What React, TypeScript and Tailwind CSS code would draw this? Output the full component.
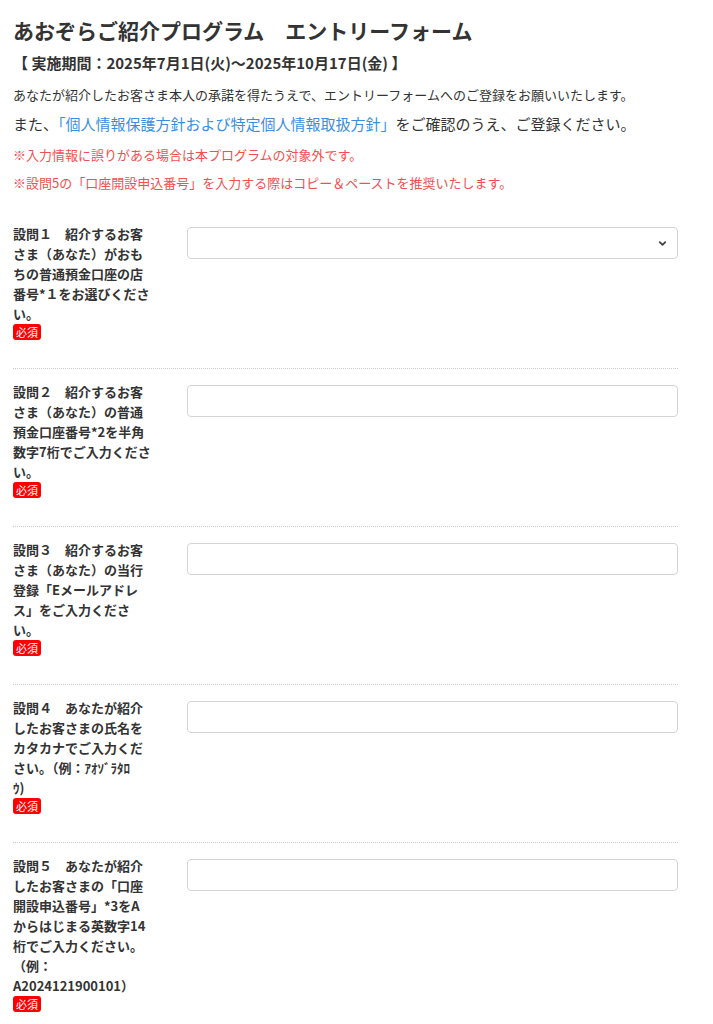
import { ChevronDown } from "lucide-react";

const questions = [
  {
    lines: ["設問１　紹介するお客", "さま（あなた）がおも", "ちの普通預金口座の店", "番号*１をお選びくださ", "い。"],
    kind: "select",
  },
  {
    lines: ["設問２　紹介するお客", "さま（あなた）の普通", "預金口座番号*2を半角", "数字7桁でご入力くださ", "い。"],
    kind: "text",
  },
  {
    lines: ["設問３　紹介するお客", "さま（あなた）の当行", "登録「Eメールアドレ", "ス」をご入力くださ", "い。"],
    kind: "text",
  },
  {
    lines: ["設問４　あなたが紹介", "したお客さまの氏名を", "カタカナでご入力くだ", "さい。（例：ｱｵｿﾞﾗﾀﾛ", "ｳ)"],
    kind: "text",
  },
  {
    lines: [
      "設問５　あなたが紹介",
      "したお客さまの「口座",
      "開設申込番号」*3をA",
      "からはじまる英数字14",
      "桁でご入力ください。",
      "（例：",
      "A2024121900101）",
    ],
    kind: "text",
  },
];

const Required = () => (
  <span className="flex h-4 w-7 items-center justify-center rounded-[3px] bg-[#ff0000] text-[11px] leading-none text-white">
    必須
  </span>
);

const QuestionRow = ({ lines, kind, last }: { lines: string[]; kind: string; last: boolean }) => {
  return (
    <div
      className={`grid grid-cols-[148px_1fr] gap-x-[26px] pt-[13px] pb-[28px] ${
        last ? "" : "border-b border-dotted border-[#cccccc]"
      }`}
    >
      <div>
        <p className="text-[13px] leading-[20px] font-bold text-[#333]">
          {lines.map((l, i) => (
            <span key={i} className="block whitespace-nowrap">
              {l}
            </span>
          ))}
        </p>
        <Required />
      </div>
      <div className="pt-[3px]">
        {kind === "select" ? (
          <div className="relative">
            <select className="h-8 w-full appearance-none rounded-[4px] border border-[#d4d4d4] bg-white px-2 text-[13px]">
              <option></option>
            </select>
            <ChevronDown
              size={11}
              strokeWidth={4}
              className="pointer-events-none absolute right-[10px] top-[11px] text-[#444]"
            />
          </div>
        ) : (
          <input
            type="text"
            className="h-8 w-full rounded-[4px] border border-[#d4d4d4] bg-white px-2 text-[13px]"
          />
        )}
      </div>
    </div>
  );
};

const App = () => {
  return (
    <div
      className="min-h-screen bg-white pl-[13px] pr-[35px] text-[#333]"
      style={{ fontFamily: '"Noto Sans CJK JP", "Noto Sans", sans-serif' }}
    >
      <h1 className="pt-[15px] text-[21px] leading-[30px] font-bold">
        あおぞらご紹介プログラム　エントリーフォーム
      </h1>
      <p className="mt-[7px] text-[15px] leading-[22px] font-bold">
        【 実施期間：2025年7月1日(火)～2025年10月17日(金) 】
      </p>
      <p className="mt-[11px] text-[13px] leading-[20px]">
        あなたが紹介したお客さま本人の承諾を得たうえで、エントリーフォームへのご登録をお願いいたします。
      </p>
      <p className="mt-[8px] text-[15px] leading-[22px]">
        また、<span className="text-[#3b8ede]">「個人情報保護方針および特定個人情報取扱方針」</span>
        をご確認のうえ、ご登録ください。
      </p>
      <p className="mt-[10px] text-[13px] leading-[20px] text-[#f05050]">
        ※入力情報に誤りがある場合は本プログラムの対象外です。
      </p>
      <p className="mt-[8px] text-[13px] leading-[20px] text-[#f05050]">
        ※設問5の「口座開設申込番号」を入力する際はコピー＆ペーストを推奨いたします。
      </p>
      <form className="mt-[18px]">
        {questions.map((q, i) => (
          <QuestionRow key={i} lines={q.lines} kind={q.kind} last={i === questions.length - 1} />
        ))}
      </form>
    </div>
  );
};

export default App;
